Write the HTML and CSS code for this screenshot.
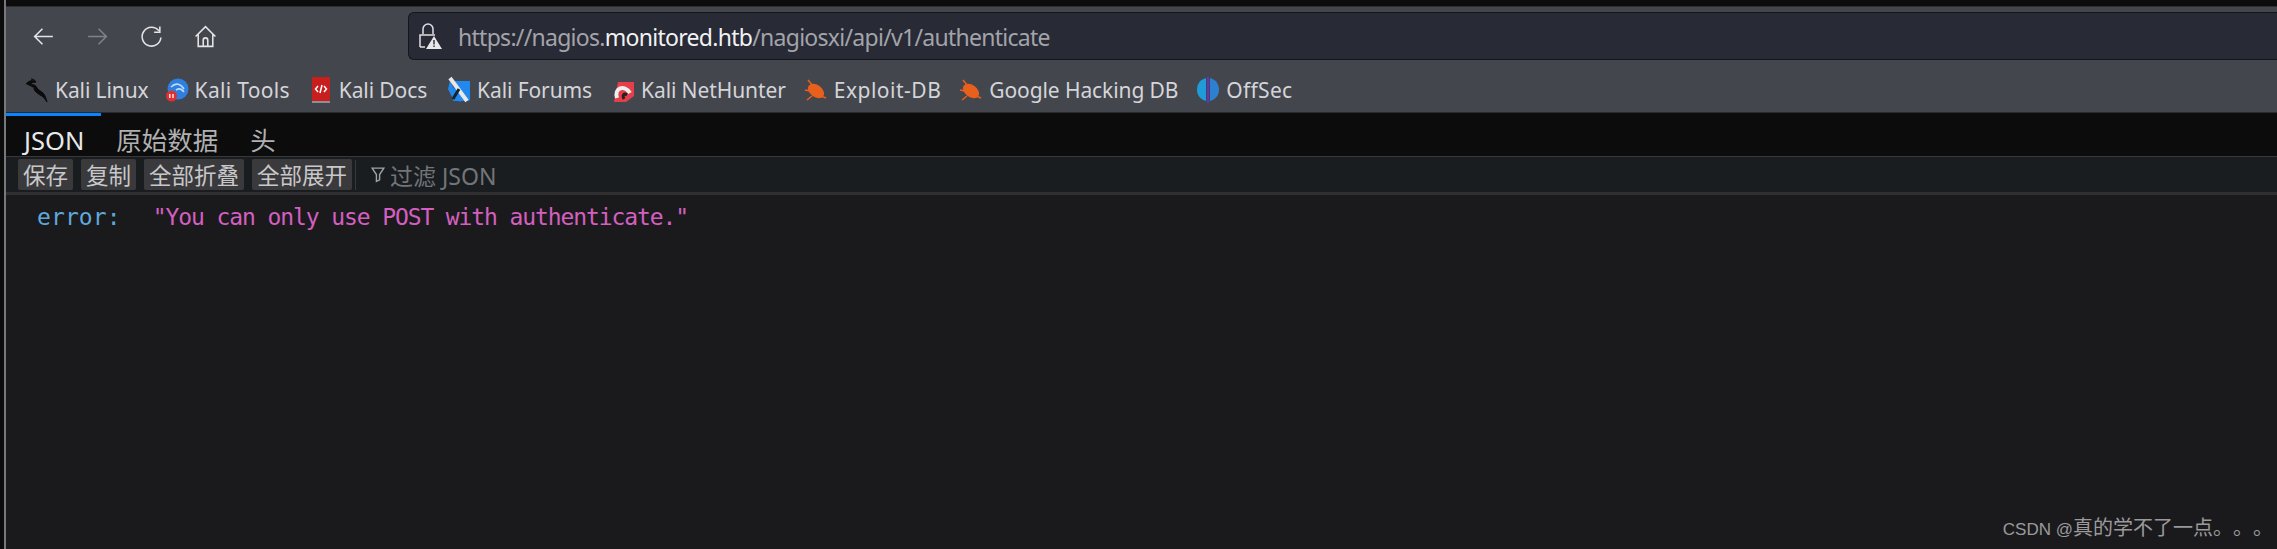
FILE: index.html
```html
<!DOCTYPE html>
<html lang="zh">
<head>
<meta charset="utf-8">
<title>authenticate</title>
<link rel="stylesheet" href="styles.css">
</head>
<body>
<div class="window">
  <div class="topstrip"></div>
  <header class="chrome">
    <div class="navrow">
      <div class="navicons">
        <svg class="nav" viewBox="0 0 24 24"><path d="M21 12H3.500M11 4.500 3.500 12l7.500 7.500"/></svg>
        <svg class="nav dim" viewBox="0 0 24 24"><path d="M3 12h17.500M13 4.500l7.500 7.500-7.500 7.500"/></svg>
        <svg class="nav" viewBox="0 0 24 24"><path d="M19 6.500A9 9 0 1 0 21 13M20 2.500V8h-5.500"/></svg>
        <svg class="nav" viewBox="0 0 24 24"><path d="M2.500 12 12 2.500 21.500 12M5 10v11.500h14V10M9.800 21.500v-6a2.200 2.200 0 0 1 4.400 0v6"/></svg>
      </div>
      <div class="urlbar">
        <svg class="lock" viewBox="0 0 26 28"><path class="lockline" d="M6 12V7a5 5 0 0 1 10 0v5M3 25V13h15M3 25h5"/><path class="lockwarn" d="M17 14 25 27H9z"/><path class="lockmark" d="M16.300 18h1.400v4.500h-1.400zM16.300 23.500h1.400v1.600h-1.400z"/></svg>
        <span class="url">https://nagios.<b>monitored.htb</b>/nagiosxi/api/v1/authenticate</span>
      </div>
    </div>
    <nav class="bookmarks">
      <a class="bm w1"><svg viewBox="0 0 24 28"><path class="kali" d="M1 8c3-4 7-4 10-2-3 0-5 1-6 3 3-1 6 0 7 3 1 2 4 3 6 5 2 2 3 5 4 9-2-3-4-6-7-7-3-2-6-4-6-7M6 3c2 0 4 1 5 3"/></svg>Kali Linux</a>
      <a class="bm w2"><svg viewBox="0 0 24 24"><circle cx="13" cy="11" r="10.500" fill="#2f7fe0"/><path d="M6 9c5-5 10-3 13 2M11 12c3-2 6-1 8 2" fill="none" stroke="#bcdcf5" stroke-width="1.600"/><circle cx="6.500" cy="18" r="5.500" fill="#e03030"/><path d="M4.800 16v4M8 16v4" stroke="#fff" stroke-width="1.300"/></svg>Kali Tools</a>
      <a class="bm w3"><svg viewBox="0 0 24 28"><rect x="3" y="1" width="18" height="25" fill="#c81e1e"/><rect x="3" y="25" width="18" height="2" fill="#8a8f98"/><path d="M9 10 6.500 13 9 16M15 10l2.500 3-2.500 3M13 9l-2 8" fill="none" stroke="#fff" stroke-width="1.500"/></svg>Kali Docs</a>
      <a class="bm w4"><svg viewBox="0 0 24 26"><path d="M8 4h15v18a2 2 0 0 1-2 2H6z" fill="#2189ee"/><path d="M3 4 1 12l5 10 8 3z" fill="#2189ee"/><path d="M3 1 20 24" stroke="#e8e8e8" stroke-width="4"/><path d="M12 12 6 22" stroke="#16222e" stroke-width="3"/></svg>Kali Forums</a>
      <a class="bm w5"><svg viewBox="0 0 24 26"><path d="M7 5h16v14L15 25H3z" fill="#e5404a"/><path d="M6 21C3 11 13 7 19 16" fill="none" stroke="#eee" stroke-width="4"/><path d="M13 22c-2-4 0-6 3-4" fill="none" stroke="#222" stroke-width="3"/></svg>Kali NetHunter</a>
      <a class="bm w6"><svg viewBox="0 0 24 24"><path class="bug" d="M4 2l5 6M1 12l5 1M3 22l5-4M22 20l-5-2"/><ellipse cx="12" cy="13" rx="9" ry="6" transform="rotate(35 12 13)" fill="#e8601c"/></svg>Exploit-DB</a>
      <a class="bm w7"><svg viewBox="0 0 24 24"><path class="bug" d="M4 2l5 6M1 12l5 1M3 22l5-4M22 20l-5-2"/><ellipse cx="12" cy="13" rx="9" ry="6" transform="rotate(35 12 13)" fill="#e8601c"/></svg>Google Hacking DB</a>
      <a class="bm w8"><svg viewBox="0 0 24 28"><path d="M10 2C3 4 1 9 1 14s3 9 9 11z" fill="#1f9bd8"/><path d="M14 2c7 2 9 7 9 12s-3 9-9 11z" fill="#2f7fd0"/><path d="M12 1v26" stroke="#5a35c8" stroke-width="2"/></svg>OffSec</a>
    </nav>
  </header>
  <main class="viewer">
    <div class="tabs">
      <span class="tab active">JSON</span>
      <span class="tab">原始数据</span>
      <span class="tab">头</span>
    </div>
    <div class="toolbar">
      <button class="btn">保存</button>
      <button class="btn">复制</button>
      <button class="btn">全部折叠</button>
      <button class="btn">全部展开</button>
      <div class="filter">
        <svg class="funnel" viewBox="0 0 14 16"><path d="M1.500 2h11L8.500 8v5l-3 1.500V8z"/></svg>
        <span>过滤 JSON</span>
      </div>
    </div>
    <div class="json">
      <span class="key">error:</span>
      <span class="str">"You can only use POST with authenticate."</span>
    </div>
  </main>
  <div class="watermark"><span class="wm-latin">CSDN @</span>真的学不了一点。。。</div>
</div>
</body>
</html>
```
FILE: styles.css
```css
* { box-sizing: border-box; }
html, body { margin: 0; height: 100%; background: #1a1a1c; }
body { font-family: "Noto Sans", "Noto Sans CJK SC", sans-serif; overflow: hidden; }
.window {
  position: relative;
  height: 549px;
  margin-left: 4px;
  border-left: 2px solid #77787c;
  display: flex;
  flex-direction: column;
  background: #1a1a1c;
  box-shadow: -4px 0 0 #0c0c0c;
}
.topstrip { height: 7px; background: #0c0c0c; border-bottom: 1px solid #2e2e31; }
.chrome { background: #44464e; height: 106px; display: flex; flex-direction: column; padding-top: 5px; border-bottom: 1px solid #2a2b2f; }
.navrow { display: flex; align-items: center; height: 48px; }
.navicons { display: flex; align-items: center; gap: 29px; padding-left: 25px; width: 402px; }
.nav { width: 25px; height: 25px; fill: none; stroke: #e4e4e6; stroke-width: 1.500; }
.nav.dim { stroke: #80828a; }
.urlbar {
  flex: 1;
  height: 48px;
  background: #282a36;
  border: 1px solid #15161b;
  border-right: 0;
  border-radius: 6px 0 0 6px;
  display: flex;
  align-items: center;
  padding-left: 8px;
}
.lock { width: 26px; height: 28px; margin-right: 15px; }
.lockline { fill: none; stroke: #e0e0e2; stroke-width: 1.500; }
.lockwarn { fill: #e8e8ea; }
.lockmark { fill: #282a36; }
.url { font-size: 23px; line-height: 48px; padding-top: 1px; color: #a3a4aa; letter-spacing: -0.72px; white-space: nowrap; }
.url b { font-weight: 400; color: #f2f2f4; }
.bookmarks { display: flex; align-items: center; height: 52px; padding: 7px 0 0 19px; }
.bm { display: flex; align-items: center; font-size: 21px; color: #d4d5d8; letter-spacing: -0.1px; white-space: nowrap; }
.bm svg { width: 24px; height: 28px; margin-right: 6px; flex: none; }
.kali { fill: #0b0b0d; stroke: #0b0b0d; stroke-width: 1; }
.bug { fill: none; stroke: #e8601c; stroke-width: 1.500; }
.viewer { flex: 1; display: flex; flex-direction: column; position: relative; }
.viewer::before { content: ""; position: absolute; left: 0; top: 0; width: 95px; height: 3px; background: #0a84ff; }
.tabs { height: 44px; background: #0c0c0c; display: flex; align-items: flex-end; gap: 32px; padding: 0 0 0 18px; border-bottom: 1px solid #38383b; }
.tab { font-size: 25.500px; line-height: 32px; color: #b0b0b2; }
.tab.active { color: #e8e8ea; }
.toolbar { height: 38px; background: #1a1d20; display: flex; align-items: center; gap: 8px; padding-left: 12px; border-bottom: 3px solid #303033; }
.btn { height: 31px; border: 0; border-radius: 2px; background: #3a3a3d; color: #c8c8ca; font: 22.500px/31px "Noto Sans CJK SC", sans-serif; padding: 0 5px; }
.filter { display: flex; align-items: center; margin-left: -5px; padding-left: 14px; height: 30px; flex: 1; border-left: 1px solid #38383b; color: #727579; font-size: 23px; gap: 4px; }
.funnel { width: 16px; height: 17px; fill: none; stroke: #a0a2a6; stroke-width: 1.300; }
.json { padding: 5px 0 0 31px; font: 23px/34px "DejaVu Sans Mono", monospace; display: flex; gap: 32px; }
.key { color: #5fa8dc; letter-spacing: 0.1px; }
.str { color: #d45fc0; letter-spacing: -1.1px; }
.watermark { position: absolute; right: 4px; bottom: 8px; font-size: 20px; color: #9a9a9c; font-family: "Noto Sans CJK SC", sans-serif; text-spacing-trim: space-all; }
.wm-latin { font-family: "Liberation Sans", sans-serif; font-size: 17px; }
.w1 { margin-right: 16px; }
.w2 { margin-right: 19px; letter-spacing: 0.3px; }
.w3 { margin-right: 20px; }
.w4 { margin-right: 19px; }
.w5 { margin-right: 18px; }
.w6 { margin-right: 18px; letter-spacing: 0.5px; }
.w7 { margin-right: 18px; }
.w8 { letter-spacing: 0.3px; }
```
